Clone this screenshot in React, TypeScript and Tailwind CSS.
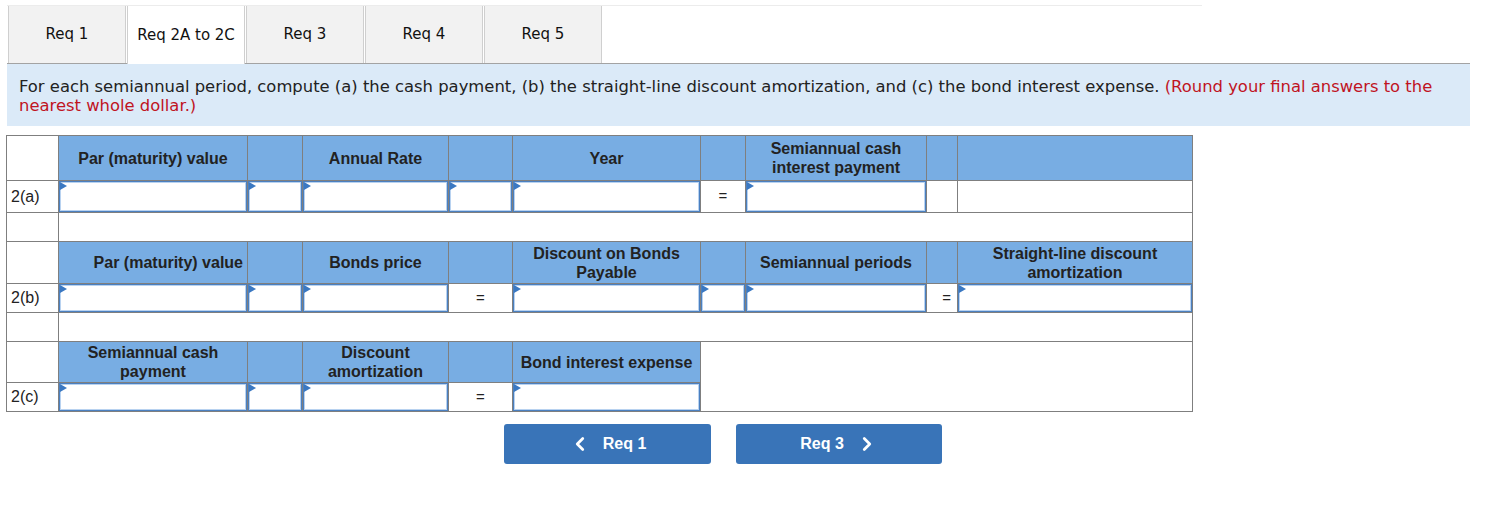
import React from "react";
import { ChevronLeft, ChevronRight } from "lucide-react";

const tabs = ["Req 1", "Req 2A to 2C", "Req 3", "Req 4", "Req 5"];

const cellBorder = "border border-[#7f7f7f]";

function Flag() {
  return (
    <span className="absolute left-0 top-0 w-0 h-0 border-y-[4px] border-y-transparent border-l-[7px] border-l-[#3a78c2]" />
  );
}

function InputCell({ h }: { h: string }) {
  return (
    <td className={`${cellBorder} p-0 align-top`}>
      <div
        className={`relative ${h} bg-white border border-[#4b80c0] shadow-[inset_0_0_0_1px_#b8d2f0]`}
      >
        <Flag />
      </div>
    </td>
  );
}

function Head({ children, className = "" }: { children?: React.ReactNode; className?: string }) {
  return (
    <td
      className={`${cellBorder} bg-[#78ade3] text-[#222] font-bold text-[16px] leading-[19px] text-center px-0.5 ${className}`}
    >
      {children}
    </td>
  );
}

function Eq({ className = "text-center" }: { className?: string }) {
  return <td className={`${cellBorder} text-[15px] text-[#222] ${className}`}>=</td>;
}

function Label({ children }: { children?: React.ReactNode }) {
  return <td className={`${cellBorder} text-[16px] text-[#222] pl-1 bg-white`}>{children}</td>;
}

function Empty() {
  return <td className={`${cellBorder} bg-white`} />;
}

export default function App() {
  return (
    <div className="w-[1487px] h-[526px] bg-white pt-[5px] font-['Liberation_Sans',Arial,sans-serif]">
      <div className="pl-[7px]">
        {/* tab strip */}
        <div className="flex w-[1195px] border-t border-[#ececec] pl-px">
          {tabs.map((t, i) => (
            <div
              key={t}
              className={
                i === 1
                  ? "relative z-10 -mb-px w-[118px] h-[58px] mr-px flex items-center justify-center border-x border-[#cfcfcf] bg-white text-[15px] text-[#111] font-['DejaVu_Sans',Verdana,sans-serif]"
                  : "w-[118px] h-[57px] mr-px flex items-center justify-center border-x border-[#cfcfcf] bg-[#f2f2f2] text-[15px] text-[#111] font-['DejaVu_Sans',Verdana,sans-serif]"
              }
            >
              {t}
            </div>
          ))}
        </div>

        {/* instructions */}
        <div className="w-[1463px] border-t border-[#a3a3a3] bg-[#dbeaf8] pl-3 pr-3 pt-[13px] pb-[11px] text-[16.4px] leading-[19px] text-[#222] font-['DejaVu_Sans',Verdana,sans-serif]">
          For each semiannual period, compute (a) the cash payment, (b) the straight-line discount amortization, and (c) the
          bond interest expense.{" "}
          <span className="text-[#c0141f]">(Round your final answers to the nearest whole dollar.)</span>
        </div>

        {/* worksheet */}
        <table className="-ml-px mt-[9px] table-fixed border-collapse w-[1186px]">
          <colgroup>
            <col className="w-[52px]" />
            <col className="w-[189px]" />
            <col className="w-[55px]" />
            <col className="w-[146px]" />
            <col className="w-[64px]" />
            <col className="w-[188px]" />
            <col className="w-[45px]" />
            <col className="w-[181px]" />
            <col className="w-[31px]" />
            <col className="w-[235px]" />
          </colgroup>
          <tbody>
            <tr className="h-[45px]">
              <Empty />
              <Head>Par (maturity) value</Head>
              <Head />
              <Head>Annual Rate</Head>
              <Head />
              <Head>Year</Head>
              <Head />
              <Head>
                Semiannual cash
                <br />
                interest payment
              </Head>
              <Head />
              <Head />
            </tr>
            <tr className="h-[32px]">
              <Label>2(a)</Label>
              <InputCell h="h-[31px]" />
              <InputCell h="h-[31px]" />
              <InputCell h="h-[31px]" />
              <InputCell h="h-[31px]" />
              <InputCell h="h-[31px]" />
              <Eq />
              <InputCell h="h-[31px]" />
              <Empty />
              <Empty />
            </tr>
            <tr className="h-[29px]">
              <Empty />
              <td colSpan={9} className={`${cellBorder} bg-white`} />
            </tr>
            <tr className="h-[42px]">
              <Empty />
              <Head className="text-right pr-1">Par (maturity) value</Head>
              <Head />
              <Head>Bonds price</Head>
              <Head />
              <Head>
                Discount on Bonds
                <br />
                Payable
              </Head>
              <Head />
              <Head>Semiannual periods</Head>
              <Head />
              <Head>
                Straight-line discount
                <br />
                amortization
              </Head>
            </tr>
            <tr className="h-[29px]">
              <Label>2(b)</Label>
              <InputCell h="h-[28px]" />
              <InputCell h="h-[28px]" />
              <InputCell h="h-[28px]" />
              <Eq />
              <InputCell h="h-[28px]" />
              <InputCell h="h-[28px]" />
              <InputCell h="h-[28px]" />
              <Eq className="text-right pr-1.5" />
              <InputCell h="h-[28px]" />
            </tr>
            <tr className="h-[29px]">
              <Empty />
              <td colSpan={9} className={`${cellBorder} bg-white`} />
            </tr>
            <tr className="h-[41px]">
              <Empty />
              <Head>
                Semiannual cash
                <br />
                payment
              </Head>
              <Head />
              <Head>
                Discount
                <br />
                amortization
              </Head>
              <Head />
              <Head>Bond interest expense</Head>
              <td colSpan={4} rowSpan={2} className={`${cellBorder} bg-white`} />
            </tr>
            <tr className="h-[29px]">
              <Label>2(c)</Label>
              <InputCell h="h-[28px]" />
              <InputCell h="h-[28px]" />
              <InputCell h="h-[28px]" />
              <Eq />
              <InputCell h="h-[28px]" />
            </tr>
          </tbody>
        </table>

        {/* navigation */}
        <div className="flex gap-[25px] pl-[497px] mt-[12px]">
          <button className="w-[207px] h-[40px] rounded-[3px] bg-[#3974b8] text-white font-bold text-[16px] flex items-center justify-center gap-3">
            <ChevronLeft size={22} strokeWidth={3} />
            <span>Req 1</span>
          </button>
          <button className="w-[206px] h-[40px] rounded-[3px] bg-[#3974b8] text-white font-bold text-[16px] flex items-center justify-center gap-3">
            <span>Req 3</span>
            <ChevronRight size={22} strokeWidth={3} />
          </button>
        </div>
      </div>
    </div>
  );
}
